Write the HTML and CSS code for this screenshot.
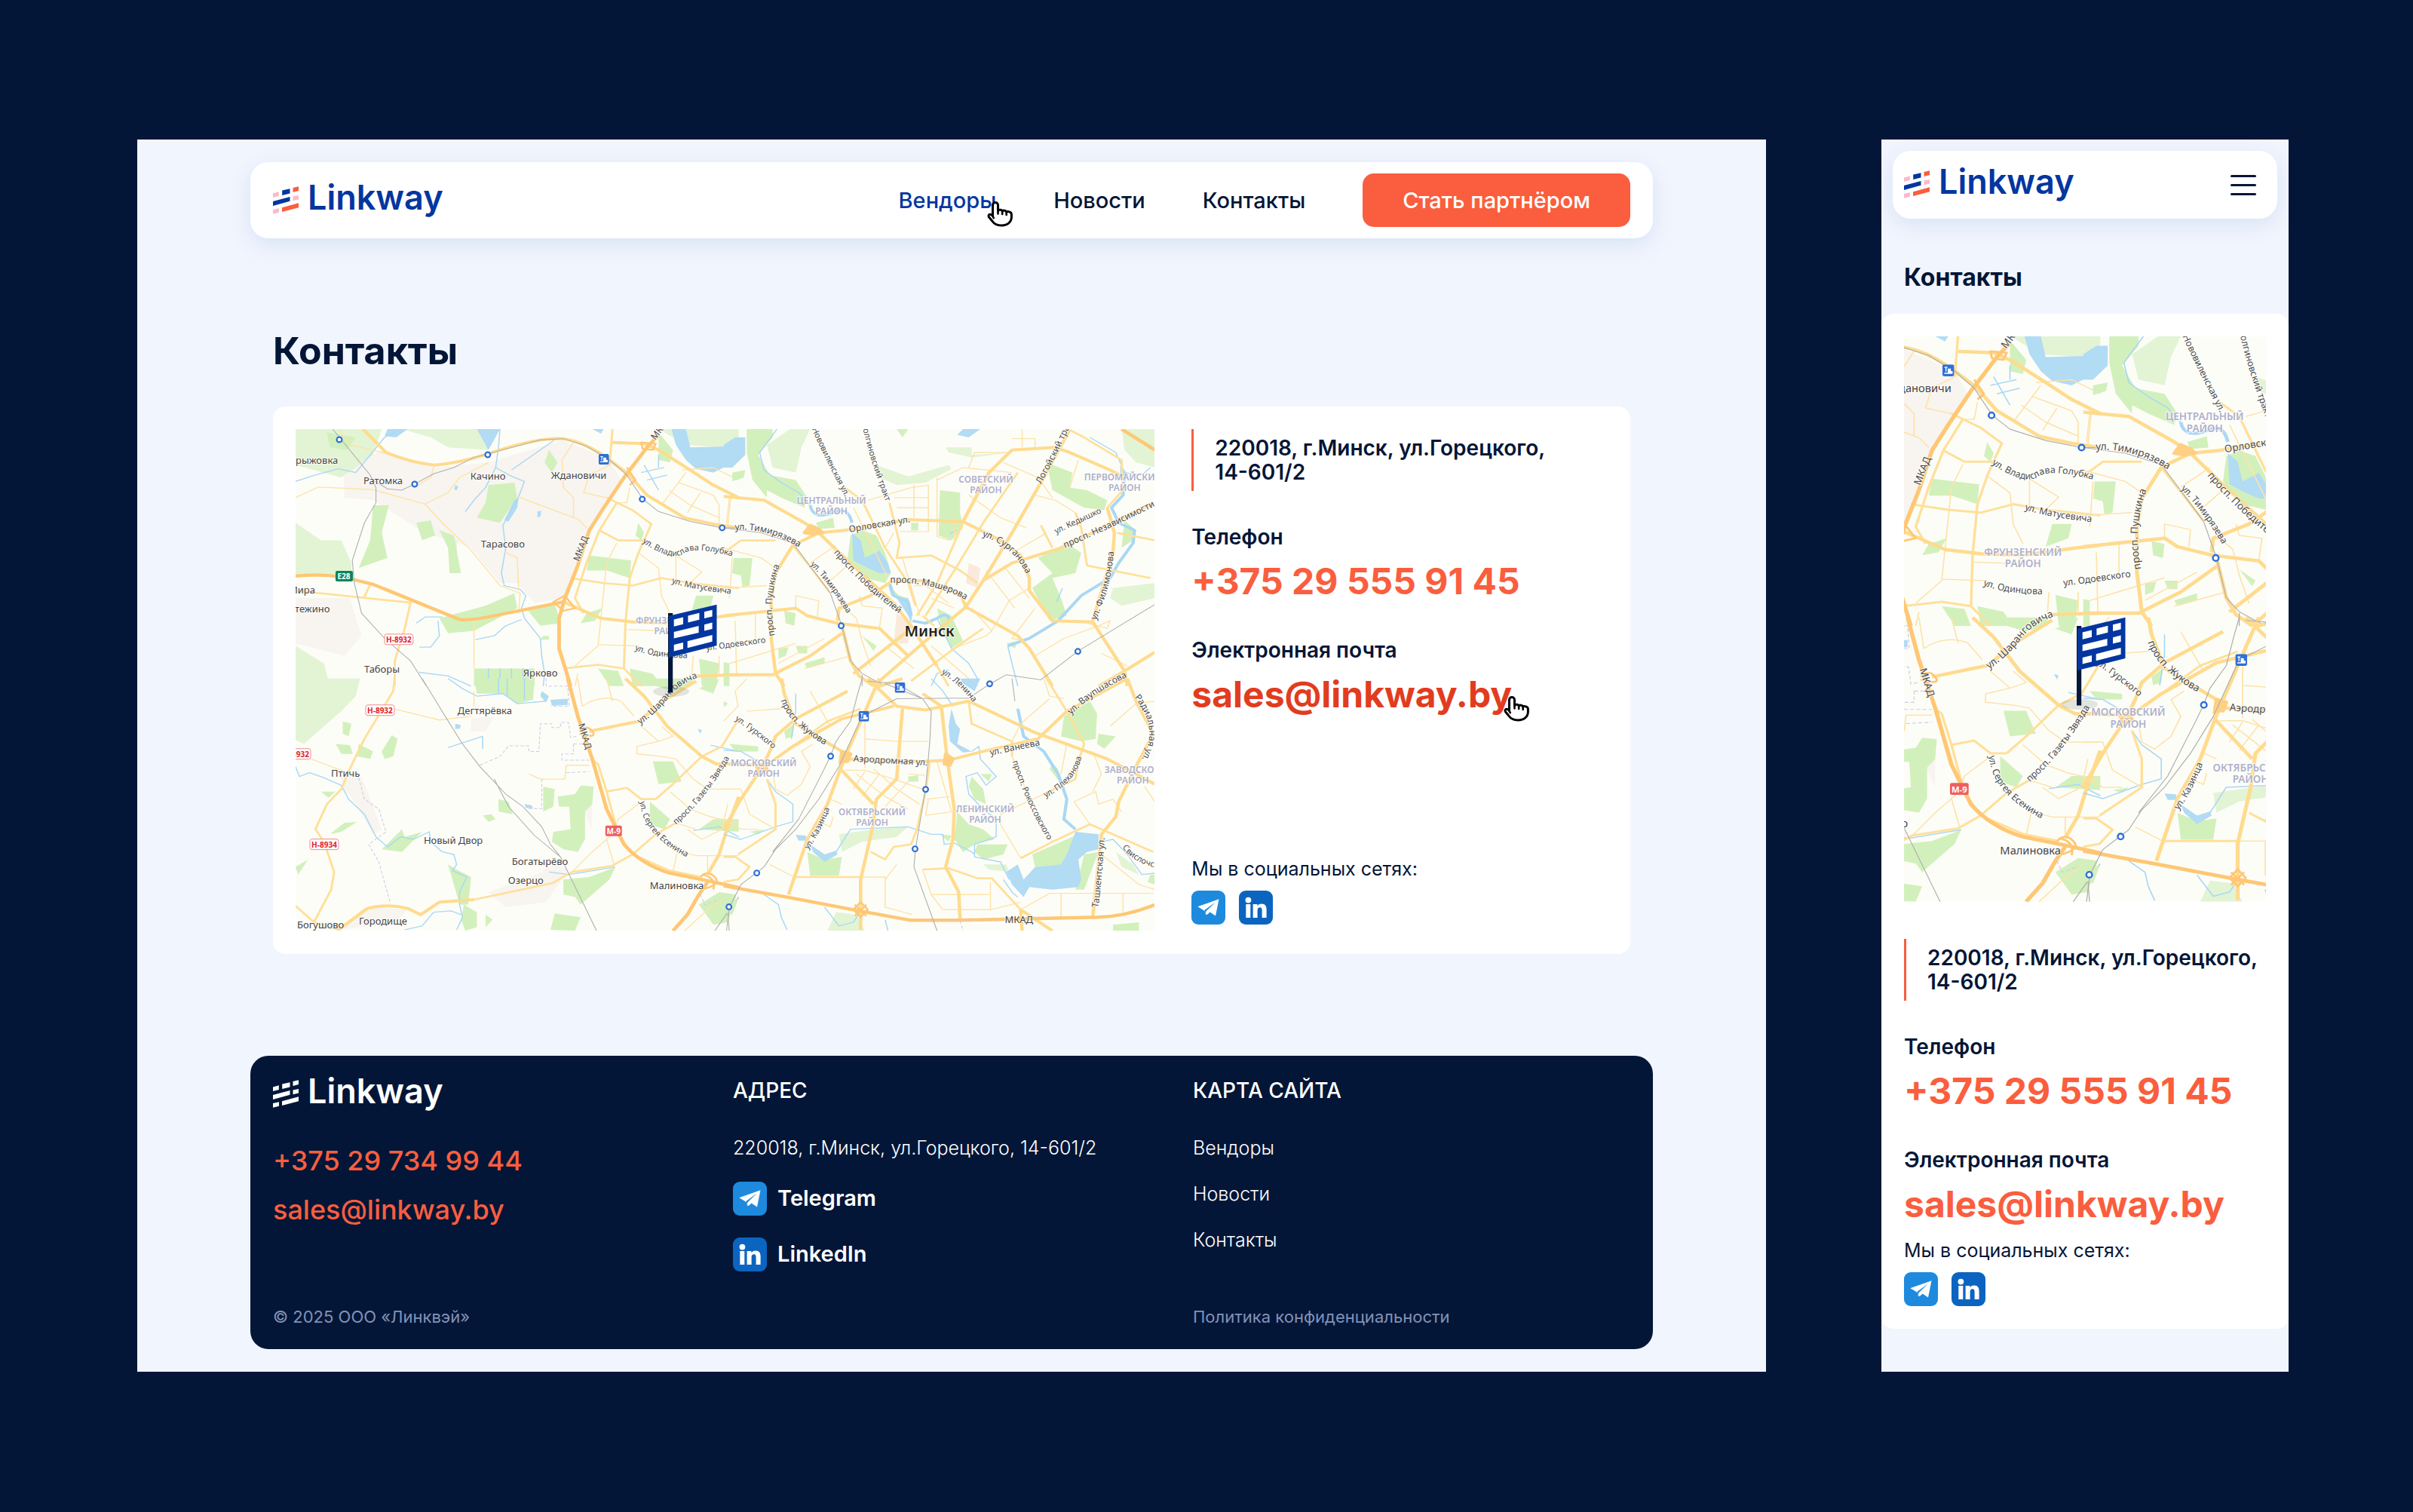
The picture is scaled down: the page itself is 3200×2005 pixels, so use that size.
FILE: index.html
```html
<!DOCTYPE html>
<html lang="ru">
<head>
<meta charset="utf-8">
<title>Linkway — Контакты</title>
<link rel="stylesheet" href="styles.css">
</head>
<body>
<svg class="sprite" aria-hidden="true">
  <defs>
    <symbol id="mark" viewBox="0 0 34 37">
      <path class="mark-c" d="M0 9.5 7.8 7.2V13L0 15zM26.5 13.6 34 12v5.4l-7.5 1.8zM0 31l8-1.8v5.6l-8 2z"/>
      <path class="mark-a" d="M12.2 5.6 22.5 3.2v6.4l-10.3 2.4zM0 20l22.5-6v5.8L0 26z"/>
      <path class="mark-b" d="M26.500 2 34 .2v5.9l-7.500 1.900zM12 28.300 34 22.300v6L12 34z"/>
    </symbol>
    <symbol id="telegram" viewBox="0 0 45 45">
      <rect width="45" height="45" rx="9" fill="#1e8ade"/>
      <path fill="#fff" d="M8.500 21.200 36.500 11.200 32 33.500 24.600 28.600 20.500 32.200 19.200 27.800 31 16.600 16.800 25.200z"/>
      <path fill="#fff" d="M8.500 21.200 17.600 27 19.300 32.600 21 27.600 34 13z"/>
      <path d="M17.300 26 31.600 15.600 19.400 27.600 18.900 31z" fill="#1e8ade"/>
    </symbol>
    <symbol id="linkedin" viewBox="0 0 45 45">
      <rect width="45" height="45" rx="9" fill="#0b65c0"/>
      <circle cx="12.400" cy="12.600" r="3.900" fill="#fff"/>
      <path fill="#fff" d="M9.300 18h6v18h-6zM18.600 18h5.800v2.400c1-1.800 3-2.900 5.600-2.900 5 0 6.600 3.100 6.600 7.800V36h-6v-9.600c0-2.500-.6-4.100-2.900-4.100s-3.100 1.700-3.100 4.100V36h-6z"/>
    </symbol>
    <symbol id="hand" viewBox="0 0 35 34">
      <path d="M7.500 19.500V5a3.500 3.500 0 0 1 7 0v7.500c.6-2 5.400-1.700 5.700.7.700-1.700 5.200-1.400 5.500 1.100 1.200-1.500 6.700-.7 6.700 3v3.500C32.400 27.500 27 32 19.300 32 12 32 8.600 28.800 6.700 26L2.400 20.700c-1.700-3.200 2.200-5.300 5.100-1.200z" fill="#fff" stroke="#000" stroke-width="3" stroke-linejoin="round"/>
      <path d="M14.500 12v4.500M20.200 13v4M25.700 14.500v3.500M7.500 19.500l1.300 2.700" fill="none" stroke="#000" stroke-width="2.600" stroke-linecap="round"/>
    </symbol>
    <symbol id="flag" viewBox="0 0 66 118">
      <path fill="#04163a" d="M0 12h6.200v105.500H0z"/>
      <path fill="#0336a0" d="M1 15.700 64.500.7V55L1 71z"/>
      <path fill="#fff" d="M7.700 20.400 20 17.400v9.300l-12.300 3zM26.400 15.400l15-3.700v9l-15 3.800zM48 10.300l10.600-2.600v8.800L48 19zM7.700 37l32.900-8v8.900L7.700 45.600zM48 27.200l10.600-2.700V33L48 35.600zM7.700 54 20 51v8.400l-12.300 3zM25.700 49.200l32.900-8.300v8.800l-32.900 8.500z"/>
    </symbol>
    <symbol id="station" viewBox="0 0 10 10" overflow="visible">
      <circle cx="5" cy="5" r="3.400" fill="#fff" stroke="#2f6fd8" stroke-width="2.200"/>
    </symbol>
    <symbol id="terminal" viewBox="0 0 14 14">
      <rect width="14" height="14" rx="2.500" fill="#2f6fd8"/>
      <path d="M2.500 3.500h3.600M4.300 3.500v5M2.300 10.500h9.500M7 5.500h2.500v3h2v2H7z" fill="#fff" stroke="#fff" stroke-width="1.200"/>
    </symbol>

    <symbol id="city-map" viewBox="0 0 1140 666" preserveAspectRatio="xMidYMid slice">
      <rect width="1140" height="666" fill="#fdfdf8"/>

      <!-- north-west sheet -->
      <g transform="translate(-12 -9) scale(.38267 .33333)">
        <path class="urban" d="M200 200 330 110 520 180 700 160 960 70 1120 150 1160 230 1060 400 1010 560 960 700 860 720 800 640 740 640 640 500 480 440 300 310 200 300zM31 700 220 700 260 850 200 930 31 880z"/>
        <path class="field" d="M31 27H330L300 130 190 220 31 170zM31 400 120 470 190 470 225 560V610H31zM400 27H730L700 110 560 100 500 60zM31 890 130 960 150 1050H31zM590 560 550 450 520 420 590 470zM1290 27H1568V110L1500 100 1390 90 1340 60z"/>
        <path class="park" d="M140 40 240 60 210 110 150 100zM300 330 355 330 330 440 350 540 250 580 290 470zM450 400 500 390 515 450 470 470zM530 430 580 450 605 600 565 600 560 500zM700 250 790 240 800 300 740 400 660 380 690 320zM910 110 940 160 920 200 895 160zM1050 530 1195 550 1190 620 1110 590 1040 590zM530 780 690 730 790 680 800 740 650 830 560 840zM830 740 930 720 950 800 880 810zM650 980H860V1050H650zM1290 40 1340 110 1330 160 1290 150zM1220 400 1240 440 1230 470 1210 450zM1420 690 1480 690 1470 740 1400 770zM1080 980 1150 990 1170 1050 1120 1050zM1190 980 1270 1000 1300 1050H1200zM1040 760 1095 740 1070 790 1020 800zM890 850H910V865H880zM1430 940 1500 960 1490 1050H1440z"/>
        <path class="water" d="M1335 27 1350 90 1385 150 1420 185 1480 200 1568 150V95L1400 100 1385 27zM350 27H420L380 60 340 55zM660 27H740L700 110zM1060 27 1100 27 1090 45zM790 310 805 300 800 340 770 395 755 390zM585 250 595 255 590 270 582 268zM870 355 883 352 880 375 870 378z"/>
        <path class="river" d="M31 235 100 210 180 185 240 200 290 130 340 60 390 30M740 27 735 100 725 180 780 215 825 235 800 310 750 410 760 500 745 600 755 650 810 665 830 690 815 740 825 780 880 860 885 930 895 1000 890 1050M725 180 690 260 650 310 620 355M780 190 930 70M540 775 480 775 450 800M655 865 720 850 760 810 815 785M460 995 560 1010 640 1050M460 895 500 895 530 850 525 790M1230 200 1310 180M1240 170 1290 270M1250 230 1320 210M1290 130V180M700 980V1050M740 980V1050M780 980V1050M820 980V1050"/>
        <path class="lane" d="M180 27 220 90 350 125M31 300 110 258 300 268 480 325 540 400 640 510 740 650 810 680 805 760M510 180 500 220 440 260M480 325 560 280 600 220 700 160M1000 70 955 150 960 260 995 300V380M800 295 880 330 1010 385 1040 420M755 515 800 540 805 670M1145 480 1110 560 1080 890 1000 970M1080 885 1220 890M1180 825 1320 830M1220 520 1290 580 1300 690 1330 760M1350 530 1440 595 1390 650M1350 530V650M1300 330 1385 200M1325 270 1400 330 1500 380M1435 280 1390 360M1360 240 1480 290 1500 330V405M1540 300 1530 410M650 780V980M1120 170 1050 210 1030 280 1110 300M1190 260 1180 320 1145 320M1370 190 1480 180 1568 230M1410 930 1405 1010M1500 930V1000M1000 1050 1010 1000"/>
        <path class="street" d="M31 670 430 718 410 820 375 950V1050M1110 300 1200 350 1265 405 1220 520 1190 620 1175 800 1170 980 1230 1050M1145 320 1085 430 1040 560 1000 700 1030 760M985 620 1100 640 1200 650 1300 620 1400 640 1568 660M1085 430 1150 470 1240 470M960 980 1080 965 1170 980M290 645 270 695M1130 27 1120 170"/>
        <path class="avenue" d="M960 715 1090 780 1200 795 1330 800 1490 775 1568 765M1130 80 1240 85 1290 110 1400 190 1480 250 1568 300M1180 200 1250 290 1380 380 1480 405 1568 420M1420 1010 1568 1005M265 27 345 120Q430 160 510 170 600 165 740 110 880 60 960 65 1040 80 1120 150L1190 210"/>
        <path class="highway" d="M1290 50 1250 100 1170 220 1100 340 1050 430 1010 570 965 700 945 780V900L985 1050M31 612Q150 600 230 625L300 645 600 785Q640 790 720 770L960 715"/>
        <path class="ring" d="M925 715 965 690 1000 740 960 750zM1230 80 1280 85 1270 110 1235 105zM1180 180 1210 230 1190 250"/>
        <path class="rail" d="M160 27 290 210 310 260V320L270 400 228 550 235 640 260 760 340 860 430 950 485 1050M300 230 350 265 400 270 445 245 510 205 580 180 650 140 880 70 960 65 1040 95 1120 150 1180 210 1235 305 1290 355 1400 395 1510 420H1568"/>
      </g>

      <!-- south-west sheet -->
      <g transform="translate(-12 331) scale(.38267 .33333)">
        <path class="urban" d="M180 370 260 390 290 480 330 600 300 620 240 500 200 440zM640 160 720 150 690 210 640 210zM700 850 850 790 930 740 980 760 900 890 760 910zM1060 490 1030 530 1060 600zM190 1000 290 910 420 920 380 970z"/>
        <path class="field" d="M31 0H255L240 70 190 130 60 260 31 245z"/>
        <path class="park" d="M170 260 220 265 230 300 190 300zM250 260 300 290 290 320 245 310zM365 225 385 240 370 310 340 320 330 290zM195 170 225 180 215 230 195 220zM650 0H860L855 85 800 100 750 60H660zM940 470 1000 460 1020 425 1065 430 1060 500 1035 530V640L1010 690 960 680 920 650 925 610 985 600 980 510 945 510zM890 430 930 440 925 510 890 530zM735 480 770 490 785 540 735 530zM680 545 710 540 725 560 700 570zM560 740 590 760 640 790 630 900 600 900zM615 900 660 930 660 990 620 1004 605 960zM690 940 715 960 690 990zM960 800 1050 790 1140 750 1120 800 1020 900 1000 870 960 860zM930 935 1020 950 1000 1004 915 1000zM330 680 400 600 410 630 470 610 400 690zM150 620 200 575 245 570 190 610zM120 450 170 450 145 475zM31 750 75 720 40 780zM1270 330 1340 330 1370 410 1290 420zM1260 490 1330 560 1310 600 1260 580zM1190 0 1340 50 1400 30 1410 0zM1430 40 1500 0 1480 60zM1480 560 1568 560V610L1430 600zM1430 900 1500 850 1560 860 1530 970 1480 980z"/>
        <path class="water" d="M915 85 975 80 975 105 920 108zM885 50 910 70 900 95 880 70zM585 180 605 185 600 200 585 200zM825 500 850 505 855 518 830 515zM1425 200 1440 205 1435 220z"/>
        <path class="river" d="M31 350 45 390 80 375 130 395 190 425 215 480 270 540 310 630 350 670 395 630 440 640 495 610 500 650 540 690 580 700 590 740 575 765 625 790 600 850V900L610 950 590 1000M410 1000 470 985 510 930 570 925 605 940M560 0 610 40 660 70 750 60 800 100 900 90M735 0V60M765 0V70M825 0V85M560 275 680 230V280M910 770 980 780 1140 750M1470 265 1568 290M1410 605 1500 590 1568 630"/>
        <path class="lane" d="M370 120 530 165 640 150M85 320 200 370M990 770 1060 690 1130 620 1150 560 1220 500M840 380 880 400H965L970 345H1050M1370 690 1420 705H1568M1340 770 1355 690M1460 780V705M1135 740 1110 640M1230 190 1290 250 1215 270V300L1300 310 1350 320 1410 400 1460 440H1568M1290 250 1340 230 1300 190M1330 450 1400 520 1470 550 1568 575M1025 110Q1090 60 1160 90L1205 150M1110 0 1130 90M1010 0 1025 110M1390 600 1440 640 1510 600 1530 500M1350 575 1420 600M1380 1004 1450 930 1510 880M650 50V110"/>
        <path class="street" d="M375 0 370 50 270 240 215 370 190 440 140 500 100 600 130 650 165 770 155 840 95 970M31 905 95 970 180 1000 280 915Q350 895 420 915L465 940 530 890 650 880 920 815 990 770 1130 745 1200 700 1280 620 1350 575M1280 480 1340 420 1440 310 1510 270 1568 160M1110 450 1180 435 1230 480 1280 480M1055 320 1080 340 1110 450 1150 620 1200 700 1330 765 1440 790"/>
        <path class="avenue" d="M1050 210 1220 170 1320 80 1420 10M1175 0 1240 70 1320 190 1440 310 1490 340H1568M1460 780 1500 700 1530 590 1568 470M180 1000 280 915Q350 895 420 915L465 940 530 890 650 880"/>
        <path class="highway" d="M975 0 1010 150 1060 320 1110 520 1170 660Q1230 740 1330 775L1460 805 1568 832M1460 810 1430 860 1390 940 1340 1004"/>
        <path class="ring" d="M1435 790Q1460 760 1485 790T1440 840M1440 780Q1490 790 1480 840M1015 210Q1040 180 1060 210T1015 220"/>
        <path class="border" d="M670 345 740 310 770 268H840V290H875L880 180H920V195H950V175H978L985 235 1005 230M995 260H1040M995 260V300H955V325H1050M970 375 1050 370M885 400V518H840M250 395 270 480 320 520 345 610 285 660 320 730 360 895M900 0V30L975 30 980 110H915M1435 860 1450 900 1500 880"/>
        <path class="rail" d="M470 0 550 150 610 260 670 350 760 460 820 510 885 590 915 660 950 710 1075 1004M720 400 770 510 860 625 950 710M1568 870 1530 930 1485 1004M1530 930 1535 1004"/>
      </g>

      <!-- north-east sheet -->
      <g transform="translate(568 -9) scale(.38267 .33333)">
        <path class="quarter" d="M850 560 890 580 880 660 840 640zM600 760 650 800 640 880 590 880z"/>
        <path class="field" d="M150 90 230 27H300L270 100 250 200 170 180zM530 170 640 215 780 170 790 185 700 240 600 250 540 220zM770 100 860 100V130L1000 120 860 140 780 120zM1380 27H1495V180L1430 160 1390 110zM1350 660 1495 640V700L1380 730 1340 700z"/>
        <path class="park" d="M80 27H170V60L120 130 160 210 250 230 290 300 280 340 200 300 150 270 150 300 100 230 80 120zM320 400 380 380 385 420 330 425zM440 450 480 430 530 450 560 520 580 600 560 640 490 620 430 540zM570 650 610 690 640 700 630 720 580 690zM750 270 820 280 820 360 830 420 790 470 745 450zM650 400H675V430H650zM1120 160 1210 200 1200 260 1260 270 1330 310 1320 350 1250 340 1140 270zM1090 540 1190 480 1240 520 1220 600 1140 620 1170 700 1190 770 1130 790 1070 660 1140 600zM1390 390 1430 430 1420 470 1380 500zM35 540 100 540 90 650 65 655 60 610 30 600zM740 740 790 770 830 870 790 900 760 840zM210 750 250 760 245 810 215 800zM250 890 290 890 290 920 260 920zM190 900 225 895 215 930 190 940zM280 960 350 935 350 960 290 980zM480 850 530 890 520 910zM980 880 1020 870 1010 900zM0 955 20 960V1050H0zM600 27 640 27 620 60zM30 200 75 190 70 220 30 235z"/>
        <path class="water" d="M0 90 40 60 75 60V130L30 180 0 180zM810 50 830 27H890L850 60zM1375 170 1400 205 1385 240 1375 220zM445 440 475 470 490 540 540 510 570 560 580 600 540 600 500 580 450 550zM600 700 640 700 655 760 650 800 640 770z"/>
        <path class="river" d="M185 27 125 120 140 190 200 240 260 280 300 330M740 780 790 900 850 960 885 1030M1270 60 1360 120 1390 200 1450 210 1480 180M720 1050 740 1000 780 985M985 890 1000 960 1020 1050M785 445 805 430M1155 715 1175 660"/>
        <path class="river wide" d="M300 330Q310 390 380 360 430 330 445 400M575 640 590 690 640 715 650 770M655 790 700 800 740 780Q780 750 782 790M1390 200 1385 290 1345 340 1370 400 1425 430 1420 480 1370 560 1340 620 1240 690 1160 790 1060 860 985 890"/>
        <path class="lane" d="M500 310 650 260 710 250V435H610M600 340H710M590 300H710M660 250V380M740 220V455L785 470M740 230 830 180 1000 200M1035 27V100M1000 65H1080V100M850 290 960 380 1050 420M970 160 1090 220 1140 300M850 180 870 120H1000M1080 290 1150 310 1220 360M1120 440 1000 520M1080 930 1180 860 1300 810 1340 790 1330 820 1260 800M860 740 930 830 990 710 1060 660M930 830 910 850 800 900M0 500 130 540 180 580M20 300 10 400M30 540 20 700M0 660 150 650M40 790 45 1000M110 760V880M250 740V690L330 710 325 770M300 560 390 490M360 640 440 560M470 690 480 730 550 740 540 820M420 740 460 780 480 870 510 970M190 960 350 860M280 980 440 930M590 440 560 500M450 340 570 620M910 590 1010 740M970 570 1060 700M1080 740 1000 860 1040 870M620 540 680 770M720 700 800 740M660 650 700 650 780 720M1230 150 1200 260M800 380V470M1400 970 1310 920M20 960 250 880M570 900 660 980M720 890 880 1050"/>
        <path class="street" d="M420 260 480 310 560 500 640 640 665 730M575 320 610 480 600 540 720 530 820 590 880 640M830 400 740 640 670 770M1020 200 900 400 800 590 700 770M1100 410 1140 500M1220 360 1240 420 1260 570 1480 620M1200 30 1250 60 1380 150 1385 270 1330 340M1365 440 1495 470M900 820 800 900 650 1030M690 770 730 810M740 970 780 1050M400 740 420 740M240 490 310 590 370 680M0 520 60 470 180 470"/>
        <path class="avenue" d="M0 295 140 310 280 400 330 440 420 430 640 387 830 395 960 470 1030 530 1060 620V670L1140 790 1280 795M330 440 420 540 590 720 650 810 700 900 740 970M830 395 920 200 1000 110 1150 100 1200 120 1340 190 1390 220M1200 30 1100 240 1000 440 900 630 840 735 700 870 520 1050M1490 320 1280 440 1170 500 1000 560 900 630M840 735 1020 850 1060 900 1140 1050M840 735 820 680 700 630 580 635 510 690 400 740 395 790M330 440 240 490 180 600 165 700V860L180 1000 210 1050M0 770 250 740 290 770 395 800 540 820 640 930M410 810 440 950 470 1010 520 1050M640 830 540 920 450 1000M0 1005 170 1005 300 930 410 840M1330 340 1355 440 1350 520 1280 790M1280 795 1390 990 1400 1050M1495 915 1390 990 1300 1050"/>
        <path class="highway" d="M1380 27 1495 110"/>
        <path class="hub" d="M280 440 300 410 330 425 345 440 310 445z"/>
        <path class="rail" d="M0 420 130 440 240 480 370 680 410 810 440 950 480 1000 560 1050M480 1005V1050M925 1040 980 1005 1100 1025 1230 910 1495 725"/>
      </g>

      <!-- south-east sheet -->
      <g transform="translate(568 331) scale(.38267 .33333)">
        <path class="field" d="M400 620 520 600 640 590 600 630 480 650 410 690zM900 740 980 740 990 770 920 760zM1360 690 1420 740 1440 780 1380 750zM390 930 460 940 490 1004H360z"/>
        <path class="park" d="M860 390 900 440 910 500 870 480 850 430zM810 530 850 580 900 600 940 640 870 660 830 690 800 640zM880 660 985 660 970 700 900 720 870 690zM1070 700 1230 620 1180 740 1080 750zM1250 700 1300 690 1290 720 1250 840 1220 840zM1180 150 1270 90 1295 140 1290 240 1240 250 1170 230zM1300 220 1360 230 1320 280 1295 260zM1140 340 1160 360 1165 410 1130 360zM290 690 350 720 410 710 400 785H300zM20 260 120 270 120 290 40 290zM210 210 245 180 240 230 215 240zM90 610 140 600 120 620zM0 870 50 880 30 940 0 930zM1350 980 1440 970V1004H1350zM1480 780H1495V820L1470 810zM640 390 675 385V410H640zM750 620 790 625 780 650zM0 90 15 100 0 115zM890 380 930 380 920 410z"/>
        <path class="water" d="M1220 610 1300 620V680L1260 690 1230 720 1240 800 1230 830 1140 840 1060 830 1040 870 1000 820 980 770 1020 740 1040 800 1080 750 1170 740 1190 700zM300 660 350 700 390 685 395 700 350 730 310 690zM250 622 285 625 290 645 260 645zM790 120 805 180 820 200 810 260 860 290 830 295 785 250 780 190zM820 0H890L870 50 830 20z"/>
        <path class="river" d="M720 0 760 50 795 110M860 290 885 270 890 320 945 390 910 425 880 375 840 390 850 460 900 520 945 560V630L870 660V710L960 730 990 800M150 400 180 450 240 500V570L180 590 60 640 0 620M390 690 440 600 640 590 720 620 760 620 765 660 800 655 860 690 870 700M140 860 190 900 200 950 220 1000M350 910 400 985 450 970 480 920M560 960 570 1004M1310 650 1350 640 1400 700 1450 780 1495 775M0 285 60 290 120 330M250 60V130L235 240M970 800 1000 850 1020 870"/>
        <path class="river wide" d="M1020 120 1040 230 1110 290 1160 380 1190 480 1180 560 1220 600"/>
        <path class="lane" d="M490 355V140M490 240 600 250H710M450 440 490 370M480 470 540 380M515 500 590 410M460 380 560 470 640 520M560 510 640 410M520 360 600 440 680 500M420 365H490L590 400 690 440M705 480 785 470M700 545 790 530 740 330M700 545 710 480M640 380 700 385M370 480 410 500M380 550 370 590 330 570M245 790H560V910L655 940M560 800 600 740M160 740 245 790M0 440 60 440 90 540 180 600M0 560 60 600 120 600M170 370 180 440 220 465 270 420 300 350 270 290 310 260M690 760 720 860 760 920H925V810M720 860H920M925 920 1030 890M1030 920 1130 855H1490M1170 855V950M1385 855V930M1000 250 860 180 850 90M1000 310 1040 420 1140 650M1030 715 960 580V540L1110 460M1030 180 1000 250M1215 490 1270 580M1215 490 1290 450 1300 500 1350 480 1380 530M1280 290 1310 380 1280 450M1190 260 1170 380M1310 700 1440 820 1495 840M1110 0 1130 70 1180 80M1030 180 1130 80M1495 90 1430 100 1340 190M0 170 50 110 40 50 80 0M80 130 200 120M300 50 370 190M1460 430 1495 490"/>
        <path class="street" d="M510 690 560 720 590 670 650 660 670 600 700 450 715 330M1120 0 1190 130 1250 260 1230 330 1220 400 1110 460M1000 250V310M1140 650 1270 580 1490 690M1140 650 1030 715M690 760 780 755 880 795 930 795 1030 920M0 710H40L90 750 50 800 0 810M150 400 180 500V600L50 700M475 120 360 170 240 270M245 790H480M850 90 860 180 1000 250"/>
        <path class="avenue" d="M200 0 210 60 250 180 410 290 440 300M540 0 430 290 405 360 360 500 290 640 225 860M500 0 600 110 700 125 850 90 1080 215 1330 320 1495 420M690 60 755 110 775 320 800 520 795 640 770 750 815 850 820 960M690 330 780 325 900 290 1090 240 1190 130 1400 0M400 340 420 320 690 330M620 120 600 400 530 480 515 600 475 800V1000M405 360 520 500M430 50 250 160 180 230 160 290 130 360 60 480 0 600M590 110 410 160 240 270 130 360M1400 0 1430 90 1490 220 1430 350 1370 490 1360 550 1310 620 1280 950M1030 920 1140 1004M1030 920 1035 1004M500 0 540 30 620 0M0 340 130 345"/>
        <path class="highway" d="M0 825 220 870 470 925 650 962H820L1300 950Q1400 945 1495 900"/>
        <path class="ring" d="M450 920 475 890 500 920 475 950zM455 900 495 945M495 900 455 945"/>
        <path class="hub" d="M770 300 795 320 785 345 765 340zM410 290 440 300 430 330 405 330zM115 350 135 340 150 360 125 375z"/>
        <path class="border" d="M690 965H960M820 965 830 1004"/>
        <path class="rail" d="M480 150 400 350 330 480 250 600 180 680 140 750 60 820 20 910 10 1004M440 170 390 250 370 310 340 380 260 560 170 690M480 0 465 60 440 170M560 20 690 80 720 130 715 250 700 440 665 680 660 750 740 1004M480 150 600 80 850 78 925 20M1000 0 1010 90M500 10 600 20 690 80"/>
      </g>

      <g class="town">
        <text x="0" y="46">рыжовка</text><text x="90" y="73">Ратомка</text><text x="232" y="67">Качино</text>
        <text x="339" y="66">Ждановичи</text><text x="246" y="157">Тарасово</text><text x="-9" y="218">Мира</text>
        <text x="-1" y="243">тежино</text><text x="91" y="323">Таборы</text><text x="302" y="328">Ярково</text>
        <text x="215" y="378">Дегтярёвка</text><text x="47" y="461">Птичь</text><text x="170" y="550">Новый Двор</text>
        <text x="287" y="578">Богатырёво</text><text x="282" y="603">Озерцо</text><text x="470" y="610">Малиновка</text>
        <text x="84" y="657">Городище</text><text x="2" y="662">Богушово</text><text x="941" y="655">МКАД</text>
      </g>
      <g class="district">
        <text x="497" y="258">ФРУНЗЕНСКИЙ</text><text x="497" y="272">РАЙОН</text>
        <text x="711" y="99">ЦЕНТРАЛЬНЫЙ</text><text x="711" y="113">РАЙОН</text>
        <text x="916" y="71">СОВЕТСКИЙ</text><text x="916" y="85">РАЙОН</text>
        <text x="1098" y="68">ПЕРВОМАЙСКИЙ</text><text x="1100" y="82">РАЙОН</text>
        <text x="621" y="447">МОСКОВСКИЙ</text><text x="621" y="461">РАЙОН</text>
        <text x="765" y="512">ОКТЯБРЬСКИЙ</text><text x="765" y="526">РАЙОН</text>
        <text x="915" y="508">ЛЕНИНСКИЙ</text><text x="915" y="522">РАЙОН</text>
        <text x="1111" y="456">ЗАВОДСКОЙ</text><text x="1111" y="470">РАЙОН</text>
      </g>
      <text class="capital" x="808" y="275">Минск</text>

      <g class="guides">
        <path id="p1" d="M460 150Q498 176 515 165T590 172"/><path id="p2" d="M499 204Q530 214 590 220"/>
        <path id="p3" d="M450 293Q480 305 540 304"/><path id="p4" d="M545 294 640 281"/>
        <path id="p5" d="M457 392Q480 376 495 356T540 328"/><path id="p6" d="M505 525Q540 496 575 438"/>
        <path id="p7" d="M457 494Q460 540 525 571"/><path id="p8" d="M376 176 397 122"/>
        <path id="p9" d="M375 392 392 448"/><path id="p10" d="M477 15 505-20"/>
        <path id="p11" d="M685 0Q700 34 730 92"/><path id="p12" d="M753 0Q762 42 792 120"/>
        <path id="p13" d="M583 134Q630 130 680 165"/><path id="p14" d="M683 180Q705 200 735 250"/>
        <path id="p15" d="M735 137 830 121"/><path id="p16" d="M714 164Q750 208 810 252"/>
        <path id="p17" d="M789 204Q850 202 895 230"/><path id="p18" d="M911 142Q960 156 976 210"/>
        <path id="p19" d="M989 73Q1008 40 1034-18"/><path id="p20" d="M1009 139 1080 106"/>
        <path id="p21" d="M1021 158Q1090 128 1160 92"/><path id="p22" d="M1062 254Q1086 200 1086 150"/>
        <path id="p23" d="M636 274Q625 220 646 172"/><path id="p24" d="M857 324Q885 340 905 372"/>
        <path id="p25" d="M644 360Q655 395 715 426"/><path id="p26" d="M583 386Q605 400 645 434"/>
        <path id="p27" d="M740 441 850 447"/><path id="p28" d="M680 558Q698 535 716 484"/>
        <path id="p29" d="M922 433 1000 417"/><path id="p30" d="M1029 379Q1060 348 1112 325"/>
        <path id="p31" d="M951 441Q970 500 1004 555"/><path id="p32" d="M995 489Q1038 468 1044 430"/>
        <path id="p33" d="M1113 356Q1150 400 1118 445"/><path id="p34" d="M1065 635Q1070 600 1074 535"/>
        <path id="p35" d="M1097 555Q1115 580 1155 584"/>
      </g>
      <g class="road-name">
        <text class="small"><textPath href="#p1">ул. Владислава Голубка</textPath></text>
        <text class="small"><textPath href="#p2">ул. Матусевича</textPath></text>
        <text class="small"><textPath href="#p3">ул. Одинцова</textPath></text>
        <text class="small"><textPath href="#p4">ул. Одоевского</textPath></text>
        <text><textPath href="#p5">ул. Шаранговича</textPath></text>
        <text class="small"><textPath href="#p6">просп. Газеты Звязда</textPath></text>
        <text class="small"><textPath href="#p7">ул. Сергея Есенина</textPath></text>
        <text><textPath href="#p8">МКАД</textPath></text>
        <text><textPath href="#p9">МКАД</textPath></text>
        <text><textPath href="#p10">МКАД</textPath></text>
        <text class="small"><textPath href="#p11">Нововиленская ул.</textPath></text>
        <text class="small"><textPath href="#p12">олгиновский тракт</textPath></text>
        <text><textPath href="#p13">ул. Тимирязева</textPath></text>
        <text class="small"><textPath href="#p14">ул. Тимирязева</textPath></text>
        <text><textPath href="#p15">Орловская ул.</textPath></text>
        <text><textPath href="#p16">просп. Победителей</textPath></text>
        <text><textPath href="#p17">просп. Машерова</textPath></text>
        <text><textPath href="#p18">ул. Сурганова</textPath></text>
        <text><textPath href="#p19">Логойский тракт</textPath></text>
        <text class="small"><textPath href="#p20">ул. Кедышко</textPath></text>
        <text><textPath href="#p21">просп. Независимости</textPath></text>
        <text><textPath href="#p22">ул. Филимонова</textPath></text>
        <text><textPath href="#p23">просп. Пушкина</textPath></text>
        <text class="small"><textPath href="#p24">ул. Ленина</textPath></text>
        <text><textPath href="#p25">просп. Жукова</textPath></text>
        <text class="small"><textPath href="#p26">ул. Гурского</textPath></text>
        <text><textPath href="#p27">Аэродромная ул.</textPath></text>
        <text class="small"><textPath href="#p28">ул. Казинца</textPath></text>
        <text><textPath href="#p29">ул. Ванеева</textPath></text>
        <text><textPath href="#p30">ул. Ваупшасова</textPath></text>
        <text class="small"><textPath href="#p31">просп. Рокоссовского</textPath></text>
        <text class="small"><textPath href="#p32">ул. Плеханова</textPath></text>
        <text><textPath href="#p33">Радиальная ул.</textPath></text>
        <text><textPath href="#p34">Ташкентская ул.</textPath></text>
        <text class="small"><textPath href="#p35">Свислочская</textPath></text>
      </g>

      <g>
        <use href="#station" x="53" y="9" width="10" height="10"/><use href="#station" x="250" y="29" width="10" height="10"/>
        <use href="#station" x="153" y="68" width="10" height="10"/><use href="#station" x="455" y="88" width="10" height="10"/>
        <use href="#station" x="561" y="126" width="10" height="10"/><use href="#station" x="719" y="256" width="10" height="10"/>
        <use href="#station" x="1033" y="290" width="10" height="10"/><use href="#station" x="916" y="333" width="10" height="10"/>
        <use href="#station" x="705" y="429" width="10" height="10"/><use href="#station" x="831" y="473" width="10" height="10"/>
        <use href="#station" x="817" y="552" width="10" height="10"/><use href="#station" x="607" y="584" width="10" height="10"/>
        <use href="#station" x="570" y="629" width="10" height="10"/>
        <use href="#terminal" x="402" y="33" width="14" height="14"/><use href="#terminal" x="795" y="336" width="14" height="14"/>
        <use href="#terminal" x="747" y="374" width="14" height="14"/>
      </g>
      <g class="shield">
        <rect class="euro" x="53" y="188" width="23" height="14" rx="2"/><text class="on" x="64" y="199">E28</text>
        <rect x="118" y="272" width="38" height="14" rx="3"/><text x="137" y="283">Н-8932</text>
        <rect x="93" y="366" width="38" height="14" rx="3"/><text x="112" y="377">Н-8932</text>
        <rect x="-18" y="424" width="38" height="14" rx="3"/><text x="1" y="435">Н-8932</text>
        <rect x="19" y="544" width="38" height="14" rx="3"/><text x="38" y="555">Н-8934</text>
        <rect class="main" x="411" y="526" width="22" height="14" rx="2"/><text class="on" x="422" y="537">М-9</text>
      </g>
    </symbol>
  </defs>
</svg>

<div class="board">
  <div class="screen">
    <header class="topbar">
      <a class="logo" href="#"><svg class="logo-mark" aria-hidden="true"><use href="#mark"/></svg>Linkway</a>
      <nav class="nav">
        <a class="nav-link is-hover" href="#">Вендоры<svg class="cursor" aria-hidden="true"><use href="#hand"/></svg></a>
        <a class="nav-link" href="#">Новости</a>
        <a class="nav-link" href="#">Контакты</a>
        <button class="cta" type="button">Стать партнёром</button>
      </nav>
    </header>

    <main class="content">
      <h1 class="title">Контакты</h1>
      <section class="card">
        <div class="map">
          <svg class="map-art" role="img" aria-label="Карта Минска"><use href="#city-map" width="100%" height="100%"/></svg>
          <svg class="pin" aria-hidden="true"><ellipse cx="4" cy="116" rx="24" ry="7" fill="#5a6a5a" fill-opacity=".16"/><use href="#flag" width="66" height="118"/></svg>
        </div>
        <div class="info">
          <address class="address">220018, г.Минск, ул.Горецкого,<br>14-601/2</address>
          <div class="field-group">
            <h2 class="label">Телефон</h2>
            <a class="big-link" href="tel:+375295559145">+375 29 555 91 45</a>
          </div>
          <div class="field-group">
            <h2 class="label">Электронная почта</h2>
            <a class="big-link is-hover" href="mailto:sales@linkway.by">sales@linkway.by<svg class="cursor" aria-hidden="true"><use href="#hand"/></svg></a>
          </div>
          <div class="social">
            <p class="social-label">Мы в социальных сетях:</p>
            <div class="social-row">
              <a href="#" aria-label="Telegram"><svg class="badge"><use href="#telegram"/></svg></a>
              <a href="#" aria-label="LinkedIn"><svg class="badge"><use href="#linkedin"/></svg></a>
            </div>
          </div>
        </div>
      </section>
    </main>

    <footer class="footer">
      <div class="foot-col foot-contacts">
        <a class="logo" href="#"><svg class="logo-mark" aria-hidden="true"><use href="#mark"/></svg>Linkway</a>
        <div class="foot-links">
          <a href="tel:+375297349944">+375 29 734 99 44</a>
          <a href="mailto:sales@linkway.by">sales@linkway.by</a>
        </div>
      </div>
      <div class="foot-col">
        <h2 class="foot-title">АДРЕС</h2>
        <div class="foot-list">
          <p>220018, г.Минск, ул.Горецкого, 14-601/2</p>
          <a class="network" href="#"><svg class="badge" aria-hidden="true"><use href="#telegram"/></svg>Telegram</a>
          <a class="network" href="#"><svg class="badge" aria-hidden="true"><use href="#linkedin"/></svg>LinkedIn</a>
        </div>
      </div>
      <div class="foot-col">
        <h2 class="foot-title">КАРТА САЙТА</h2>
        <nav class="foot-list">
          <a href="#">Вендоры</a>
          <a href="#">Новости</a>
          <a href="#">Контакты</a>
        </nav>
      </div>
      <p class="legal">© 2025 ООО «Линквэй»</p>
      <a class="legal policy" href="#">Политика конфиденциальности</a>
    </footer>
  </div>

  <div class="screen phone">
    <header class="topbar">
      <a class="logo" href="#"><svg class="logo-mark" aria-hidden="true"><use href="#mark"/></svg>Linkway</a>
      <button class="burger" type="button" aria-label="Меню"><span></span><span></span><span></span></button>
    </header>
    <main class="content">
      <h1 class="title">Контакты</h1>
      <section class="card">
        <div class="map">
          <svg class="map-art" role="img" aria-label="Карта Минска"><use href="#city-map" width="100%" height="100%"/></svg>
          <svg class="pin" aria-hidden="true"><ellipse cx="4" cy="116" rx="24" ry="7" fill="#5a6a5a" fill-opacity=".16"/><use href="#flag" width="66" height="118"/></svg>
        </div>
        <div class="info">
          <address class="address">220018, г.Минск, ул.Горецкого,<br>14-601/2</address>
          <div class="field-group">
            <h2 class="label">Телефон</h2>
            <a class="big-link" href="tel:+375295559145">+375 29 555 91 45</a>
          </div>
          <div class="field-group">
            <h2 class="label">Электронная почта</h2>
            <a class="big-link" href="mailto:sales@linkway.by">sales@linkway.by</a>
          </div>
          <div class="social">
            <p class="social-label">Мы в социальных сетях:</p>
            <div class="social-row">
              <a href="#" aria-label="Telegram"><svg class="badge"><use href="#telegram"/></svg></a>
              <a href="#" aria-label="LinkedIn"><svg class="badge"><use href="#linkedin"/></svg></a>
            </div>
          </div>
        </div>
      </section>
    </main>
  </div>
</div>
</body>
</html>
```
FILE: styles.css
```css
:root {
  --navy: #041637;
  --blue: #0336a0;
  --orange: #fa5e3e;
  --page: #f1f5fe;
}

* { box-sizing: border-box; }

body {
  margin: 0;
  background: var(--navy);
  color: var(--navy);
  font-family: Inter, "Noto Sans", sans-serif;
  font-size: 24px;
  line-height: 32px;
}

h1, h2, p { margin: 0; }
a { color: inherit; text-decoration: none; }
svg { display: block; }
.sprite { position: absolute; width: 0; height: 0; }

.board {
  display: grid;
  grid-template-columns: 4fr 1fr;
  gap: 153px;
  padding: 185px 165px 186px 182px;
}

.screen {
  min-width: 0;
  padding: 30px 150px;
  background: var(--page);
}

/* header */
.topbar {
  display: flex;
  align-items: center;
  justify-content: space-between;
  min-height: 101px;
  padding: 15px 30px;
  border-radius: 24px;
  background: #fff;
  box-shadow: 0 8px 30px rgba(0, 70, 150, .1);
}

.logo {
  display: flex;
  align-items: flex-end;
  gap: 12px;
  margin-bottom: 8px;
  color: var(--blue);
  font-size: 45px;
  font-weight: 600;
  line-height: 44px;
}
.logo-mark { width: 34px; height: 37px; }
.mark-a { fill: var(--mark-a, #0336a0); }
.mark-b { fill: var(--mark-b, #fa5e3e); }
.mark-c { fill: var(--mark-c, #fbb9cd); }

.nav { display: flex; align-items: center; gap: 76px; }
.nav-link { position: relative; font-size: 29px; font-weight: 500; }
.nav-link.is-hover { color: var(--blue); }

.cursor { position: absolute; width: 35px; height: 34px; }
.nav-link .cursor { right: -23px; bottom: -19px; }
.big-link .cursor { right: -24px; bottom: -6px; }

.cta {
  min-height: 71px;
  padding: 0 53px;
  border: 0;
  border-radius: 15px;
  background: var(--orange);
  color: #fff;
  font: 500 29px/32px Inter, "Noto Sans", sans-serif;
}

/* contacts */
.content { padding: 119px 30px 135px; }
.title { margin-bottom: 44px; font-size: 50px; font-weight: 700; line-height: 60px; }

.card {
  display: grid;
  grid-template-columns: 1140fr 552fr;
  gap: 49px;
  padding: 30px;
  border-radius: 16px;
  background: #fff;
}

.map { position: relative; aspect-ratio: 1140 / 666; overflow: hidden; }
.map-art { width: 100%; height: 100%; }
.pin { position: absolute; left: 43.4%; top: 34.8%; width: 66px; height: 118px; overflow: visible; }

.info { display: flex; flex-direction: column; align-items: flex-start; gap: 45px; padding-bottom: 9px; }
.address {
  padding: 9px 0 9px 28px;
  border-left: 3px solid var(--orange);
  font-size: 28px;
  font-style: normal;
  font-weight: 600;
}
.field-group { display: grid; gap: 13px; justify-items: start; }
.label { font-size: 28px; font-weight: 600; line-height: 32px; }
.big-link { position: relative; color: var(--orange); font-size: 48px; font-weight: 700; line-height: 60px; }
.big-link.is-hover { color: #e23c1f; }

.social { display: grid; gap: 13px; margin-top: auto; }
.social-label { font-size: 25px; }
.social-row { display: flex; gap: 18px; }
.badge { width: 45px; height: 45px; flex: none; }

/* footer */
.footer {
  --mark-a: #fff;
  --mark-b: #fff;
  --mark-c: #fff;
  display: grid;
  grid-template-columns: repeat(3, 1fr);
  column-gap: 30px;
  row-gap: 45px;
  padding: 25px 30px 28px;
  border-radius: 24px;
  background: var(--navy);
  color: #fff;
}
.foot-contacts .logo { margin: 0; color: #fff; }
.foot-links { display: grid; gap: 21px; margin-top: 48px; color: var(--orange); font-size: 36px; font-weight: 500; line-height: 44px; }
.foot-title { margin-bottom: 39px; font-size: 28px; font-weight: 500; line-height: 42px; }
.foot-list { display: grid; gap: 29px; justify-items: start; font-size: 25px; font-weight: 300; }
.network { display: flex; align-items: center; gap: 14px; font-size: 29px; font-weight: 600; }
.legal { color: #8292b8; font-size: 22px; line-height: 30px; }
.policy { grid-column: 3; }

/* phone screen */
.phone { padding: 15px 0 56px; }
.phone .topbar { min-height: 90px; margin: 0 15px; padding: 0 15px; }
.burger {
  display: grid;
  gap: 9px;
  align-content: center;
  width: 60px;
  height: 60px;
  padding: 0 13px;
  border: 0;
  background: none;
}
.burger span { height: 3px; border-radius: 2px; background: var(--navy); }
.phone .content { padding: 58px 0 0; }
.phone .title { margin: 0 30px 28px; font-size: 32px; line-height: 40px; }
.phone .card { grid-template-columns: 1fr; }
.phone .map { aspect-ratio: 480 / 750; }
.phone .pin { left: 47.8%; top: 49.6%; }
.phone .info { padding: 0; }
.phone .social { margin-top: -30px; }

/* map drawing */
.urban { fill: #f8f4ef; }
.quarter { fill: #fbe9dc; }
.field { fill: #e2f4d4; }
.park { fill: #d2f0bc; }
.water { fill: #b2dbf4; }
.river, .lane, .street, .avenue, .highway, .ring, .rail, .border { fill: none; stroke-linejoin: round; }
.river { stroke: #a9d8f5; stroke-width: 4; }
.river.wide { stroke-width: 11; }
.lane { stroke: #fde3aa; stroke-width: 4; }
.street { stroke: #ffe09a; stroke-width: 8; }
.avenue { stroke: #ffdb8e; stroke-width: 12; }
.highway { stroke: #ffc774; stroke-width: 13; }
.ring { stroke: #ffc774; stroke-width: 7; }
.hub { fill: #ffd083; stroke: #ffd083; stroke-width: 12; stroke-linejoin: round; }
.rail { stroke: #b0b0b0; stroke-width: 3; }
.border { stroke: #d0cbe6; stroke-width: 3; stroke-dasharray: 12 7; }
.guides { fill: none; }
.town, .road-name, .capital, .district, .shield { font-family: "Noto Sans", sans-serif; }
.town, .road-name, .capital, .district { stroke: #fff; stroke-width: 2px; stroke-opacity: .7; paint-order: stroke; }
.town { fill: #444; font-size: 13px; }
.road-name { fill: #4c4c4c; font-size: 12px; }
.road-name .small { font-size: 11px; }
.capital { fill: #222; font-size: 20px; font-weight: 600; }
.district { fill: #aeb0cb; font-size: 12px; font-weight: 600; text-anchor: middle; }
.shield { font-size: 10px; font-weight: 700; text-anchor: middle; fill: #e0222c; }
.shield rect { fill: #fff; stroke: #f08a8e; }
.shield .euro { fill: #0b8457; stroke: none; }
.shield .main { fill: #ee5f5f; stroke: none; }
.shield .on { fill: #fff; }
```
